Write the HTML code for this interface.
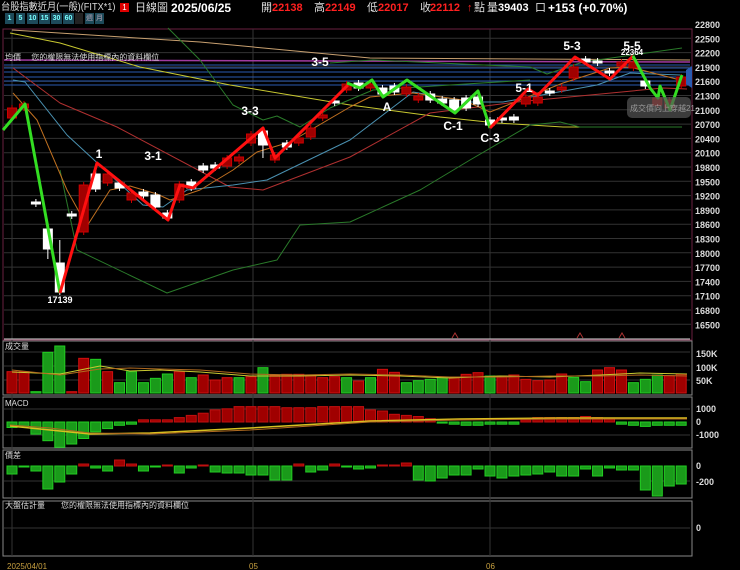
<!DOCTYPE html>
<html><head><meta charset="utf-8"><style>
body{margin:0;background:#000;width:740px;height:570px;overflow:hidden;font-family:"Liberation Sans","Noto Sans CJK TC",sans-serif}
svg{position:absolute;left:0;top:0}
.h{position:absolute;top:2px;font-size:11px;line-height:12px;height:12px;color:#ddd;white-space:nowrap}
.r{color:#ff2020;font-weight:bold}
.b{color:#fff;font-weight:bold}
.btn{position:absolute;top:13px;height:11px;background:#1d4a5a;color:#7ff;font-size:7px;line-height:11px;text-align:center;font-weight:bold}
</style></head><body>
<svg id="s" width="740" height="570" xmlns="http://www.w3.org/2000/svg" font-family="Liberation Sans, Noto Sans CJK TC, sans-serif"></svg>
<div class="h" style="left:1px;font-size:10px;transform:scaleX(0.92);transform-origin:0 0">台股指數近月(一般)(FITX*1)</div>
<div class="h" style="left:120px;top:3px;width:9px;height:9px;background:#d00;color:#fff;font-size:8px;line-height:9px;text-align:center">1</div>
<div class="h" style="left:135px">日線圖</div>
<div class="h b" style="left:171px;font-size:12px">2025/06/25</div>
<div class="h" style="left:261px">開</div><div class="h r" style="left:272px">22138</div>
<div class="h" style="left:314px">高</div><div class="h r" style="left:325px">22149</div>
<div class="h" style="left:367px">低</div><div class="h r" style="left:378px">22017</div>
<div class="h" style="left:420px">收</div><div class="h r" style="left:430px">22112</div>
<div class="h" style="left:467px;color:#f22">↑</div><div class="h" style="left:474px">點</div>
<div class="h" style="left:487px">量</div><div class="h b" style="left:498px">39403</div><div class="h" style="left:535px">口</div>
<div class="h b" style="left:548px;font-size:12px">+153 (+0.70%)</div>
<div class="btn" style="left:5px;width:9px">1</div><div class="btn" style="left:16px;width:9px">5</div><div class="btn" style="left:27px;width:11px">10</div><div class="btn" style="left:39px;width:11px">15</div><div class="btn" style="left:51px;width:11px">30</div><div class="btn" style="left:63px;width:11px">60</div><div class="btn" style="left:75px;width:8px;background:#222"></div><div class="btn" style="left:85px;width:9px;color:#889">週</div><div class="btn" style="left:95px;width:9px;color:#889">月</div>
<script>
const S=document.getElementById('s');let h='';
const L=(x1,y1,x2,y2,c,w)=>h+=`<line x1="${x1}" y1="${y1}" x2="${x2}" y2="${y2}" stroke="${c}" stroke-width="${w||1}"/>`;
const R=(x,y,w,hh,f,s)=>h+=`<rect x="${x}" y="${y}" width="${w}" height="${hh}" fill="${f}" stroke="${s||f}" stroke-width="1"/>`;
const T=(x,y,t,c,sz,b,a)=>h+=`<text x="${x}" y="${y}" fill="${c}" font-size="${sz}" ${b?'font-weight="bold"':''} ${a?'text-anchor="'+a+'"':''}>${t}</text>`;
const P=(pts,c,w)=>h+=`<polyline points="${pts}" fill="none" stroke="${c}" stroke-width="${w||1}" stroke-linejoin="round"/>`;
const fr='#6a2040';
R(3,29,689,311,'none',fr);R(3,341,689,54,'none','#888');R(3,397,689,51,'none','#888');R(3,450,689,48,'none','#888');R(3,501,689,55,'none','#888');
const prices=[22800,22500,22200,21900,21600,21300,21000,20700,20400,20100,19800,19500,19200,18900,18600,18300,18000,17700,17400,17100,16800,16500];
prices.forEach((p,i)=>{let y=24+i*14.3;if(y>30)L(4,y,691,y,'#333');T(695,y+4,p,'#ddd',9,1);});
[12,253,490].forEach(x=>{L(x,29,x,556,'#333')});
[65,68,72,77,81,85].forEach(y=>L(4,y,690,y,'#2a5ab0'));
L(4,60,690,62,'#a03aa0',1.5);
P('12,30 200,42 370,58 690,60','#c8a070');
P('10,33 60,43 140,67 230,85 350,105 440,117 497,123 563,127 682,127','#c8c830');
P('168,28 200,60 233,105 263,120 277,116 300,127 330,108 373,90 450,85 530,80','#2a7a2a');
P('330,63 373,60 530,67 547,74 583,62 682,48','#2a7a2a');
P('60,170 77,250 167,293 233,270 277,260 300,225 350,222 420,190 470,160 530,125 560,122 580,127 682,127','#2a7a2a');
P('13,68 60,103 117,127 230,187 263,190 350,157 430,113 517,102 663,88 687,89','#b03030');
P('13,80 25,82 67,135 143,205 163,207 187,190 233,185 267,180 350,140 413,92 470,102 503,102 597,85 630,73 680,75','#4a90b0');
P('13,93 37,120 67,190 87,226 110,190 130,186 157,194 170,200 200,190 233,170 257,152 290,142 350,107 370,97 413,93 463,100 490,112 563,83 610,68 630,67 680,80','#c07020');
const cd=[[108,118,'r'],[104,108,'r'],[202,204,'w'],[229,249,'w',256],[263,292,'w',243],[214,216,'w'],[185,232,'r'],[174,189,'w'],[174,183,'r'],[183,188,'w'],[193,200,'r'],[192,196,'w'],[195,207,'w'],[213,218,'w'],[184,200,'r'],[182,188,'w'],[166,170,'w'],[165,168,'w'],[158,166,'r'],[157,161,'r'],[134,143,'r'],[131,145,'w',155],[155,160,'r'],[143,147,'w'],[138,143,'r'],[128,137,'r'],[115,118,'r'],[101,103,'w'],[84,90,'r'],[83,88,'w'],[84,88,'r'],[88,94,'w'],[86,92,'w'],[87,94,'r'],[96,100,'r'],[94,100,'w'],[99,103,'w'],[100,110,'w'],[98,108,'w'],[97,104,'w'],[120,125,'w'],[118,120,'w'],[117,120,'w'],[97,104,'r'],[97,103,'r'],[91,93,'w'],[87,90,'r'],[67,78,'r'],[59,62,'w'],[61,63,'w'],[71,73,'w'],[62,66,'r'],[62,68,'r'],[81,86,'w'],[98,105,'r'],[100,108,'r'],[77,86,'r']];
const X=i=>12+i*11.95;
cd.forEach((c,i)=>{let x=X(i);let col=c[2]=='r'?'#a00000':'#fff';let wl=c[3]||null;
 L(x,Math.min(c[0],wl||c[0])-3,x,Math.max(c[1],wl||c[1])+3,c[2]=='r'?'#c00':'#fff');
 R(x-4.5,c[0],9,Math.max(1,c[1]-c[0]),col,c[2]=='r'?'#c00':'#fff');});
P('3,130 25,104 60,293','#33dd22',3);
P('60,293 97,163 168,220 180,185 193,188 263,128 275,158 348,85','#ff1010',3);
P('347,83 360,88 372,80 383,97 407,80 455,113 478,91 490,128','#33dd22',3);
P('490,128 528,89 538,95 575,57 610,79 633,56','#ff1010',3);
P('633,56 650,88 658,98 660,86 670,110 682,75','#33dd22',3);
[[99,158,'1'],[153,160,'3-1'],[250,115,'3-3'],[320,66,'3-5'],[387,111,'A'],[453,130,'C-1'],[490,142,'C-3'],[524,92,'5-1'],[572,50,'5-3'],[632,50,'5-5']].forEach(t=>T(t[0],t[1],t[2],'#fff',12,1,'middle'));
T(632,55,'22364','#fff',8,1,'middle');T(60,303,'17139','#fff',9,1,'middle');
h+=`<rect x="627" y="97" width="64" height="21" rx="5" fill="#555" fill-opacity="0.7"/>`;T(630,111,'成交價向上穿越21..','#999',8);
h+=`<path d="M686 70 L692 66 L692 88 L686 84Z" fill="#2a5ab0"/>`;
T(5,60,'均價　 您的權限無法使用指標內的資料欄位','#ddd',8);
[455,580,622].forEach(x=>h+=`<path d="M${x-3} 338 L${x} 333 L${x+3} 338" fill="none" stroke="#a33"/>`);
L(4,339,690,339,'#ddd');
const vz=[125,125,185,67,48,185,85,88,125,158,125,158,145,132,125,143,135,150,143,143,140,113,135,133,133,135,143,140,143,153,143,118,127,158,152,148,142,142,133,128,138,138,135,148,152,150,132,142,155,120,113,120,158,148,135,137,132];
const vc='rrggg rrgrg gggg rgrrrg rgrrrrrr grgrr gggg rrrgrrrrrr ggrrrgggr'.replace(/ /g,'');
[352,366,380].forEach(y=>L(4,y,690,y,'#333'));
vz.forEach((z,i)=>{let top=330+z/3;let c=(vc[i]||'r')=='r';R(X(i)-5,top,10,393-top,c?'#a00000':'#1a9a1a',c?'#d01010':'#2c2');});
P('12,372 60,374 100,366 130,371 160,370 200,372 250,376 300,376 350,375 400,376 450,378 500,376 550,377 600,375 640,373 687,374','#c8c830');
P('12,370 60,375 100,369 130,368 160,369 200,370 250,374 300,375 350,374 400,375 450,377 500,377 550,376 600,376 640,375 687,376','#b06a20');
T(5,349,'成交量','#ddd',8);T(696,357,'150K','#ddd',9,1);T(696,371,'100K','#ddd',9,1);T(696,384,'50K','#ddd',9,1);
const mz=[-5,-4,-11,-17,-23,-20,-15,-9,-6,-3,-2,2,2,2,4,6,8,11,12,14,14,14,14,13,13,13,14,14,14,14,11,10,7,6,5,3,-1,-2,-3,-3,-2,-2,-2,2,4,4,4,4,5,4,3,-2,-3,-4,-3,-3,-3];
L(4,409,690,409,'#333');L(4,435,690,435,'#333');
mz.forEach((v,i)=>{let x=X(i)-5;let p=v*1.1;if(p>0)R(x,422-p,10,p,'#a00000','#c01010');else R(x,422,10,-p,'#1a9a1a','#2c2');});
P('10,426 50,430 90,434 150,433 250,428 370,421 460,419 560,418 687,418','#d8c020',1.5);
P('10,425 50,428 90,433 150,434 250,430 370,422 460,420 560,419 687,419','#b06a20');
T(5,406,'MACD','#ddd',8);T(696,412,'1000','#ddd',9,1);T(696,425,'0','#ddd',9,1);T(696,438,'-1000','#ddd',9,1);
const sz=[-8,-1,-5,-23,-16,-8,2,-2,-5,6,2,-5,-1,1,-7,-2,1,-6,-7,-7,-9,-9,-14,-14,2,-6,-4,2,-1,-3,-2,1,1,3,-14,-15,-12,-9,-9,-3,-10,-12,-10,-9,-8,-6,-10,-10,-3,-10,-2,-4,-4,-24,-30,-20,-18];
L(4,481,690,481,'#333');
sz.forEach((v,i)=>{let x=X(i)-5;if(v>0)R(x,466-v,10,v,'#a00000','#c01010');else R(x,466,10,-v,'#1a9a1a','#2c2');});
T(5,458,'價差','#ddd',8);T(696,469,'0','#ddd',9,1);T(696,485,'-200','#ddd',9,1);
L(4,528,690,528,'#333');
T(5,508,'大盤估計量　　您的權限無法使用指標內的資料欄位','#ddd',8);T(696,531,'0','#ddd',9,1);
T(7,569,'2025/04/01','#c8a040',8);T(249,569,'05','#c8a040',8);T(486,569,'06','#c8a040',8);
S.innerHTML=h;
</script>
</body></html>
